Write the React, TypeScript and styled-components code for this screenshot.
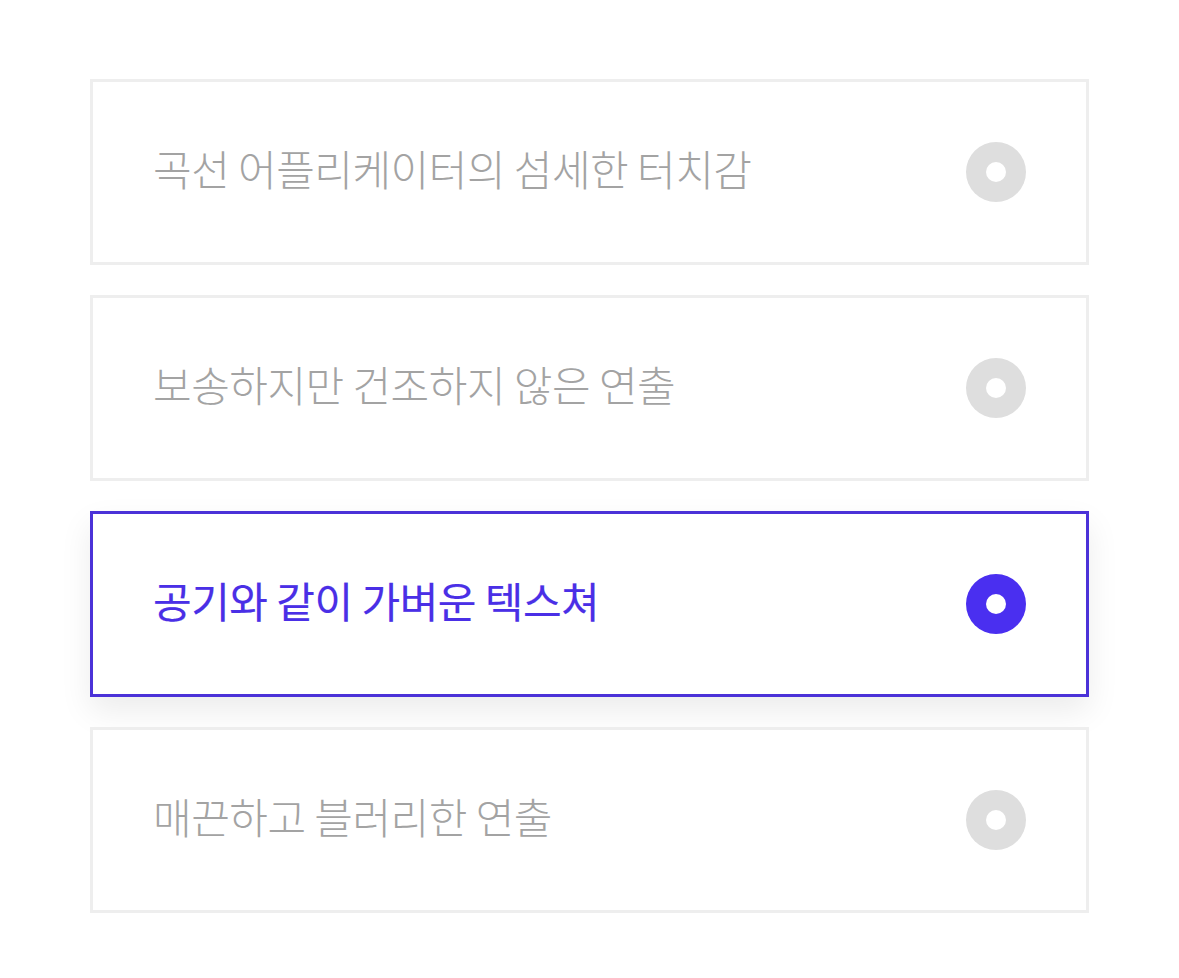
import React, { useState } from "react";
import styled, { createGlobalStyle } from "styled-components";

const Global = createGlobalStyle`
  html, body { margin: 0; padding: 0; background: #ffffff; }
  body { font-family: "Noto Sans CJK KR", "Noto Sans", sans-serif; }
`;

const List = styled.div`
  display: flex;
  flex-direction: column;
  gap: 30px;
  padding: 79px 90px 60px;
`;

const Card = styled.button<{ $active: boolean }>`
  display: flex;
  align-items: center;
  justify-content: space-between;
  height: 186px;
  box-sizing: border-box;
  padding: 0 60px;
  background: #ffffff;
  border: 3px solid ${(p) => (p.$active ? "#4b32d8" : "#eeeeee")};
  box-shadow: ${(p) => (p.$active ? "0 14px 30px rgba(0,0,0,0.08)" : "none")};
  cursor: pointer;
  text-align: left;
  font-family: inherit;
`;

const Label = styled.span<{ $active: boolean }>`
  font-size: 42px;
  letter-spacing: -0.5px;
  font-weight: ${(p) => (p.$active ? 400 : 300)};
  color: ${(p) => (p.$active ? "#4a2fe6" : "#a3a3a3")};
  -webkit-text-stroke: ${(p) => (p.$active ? "0.15px #4a2fe6" : "0")};
  line-height: 1;
  padding-bottom: 8px;
`;

const Dot = styled.span<{ $active: boolean }>`
  width: 60px;
  height: 60px;
  border-radius: 50%;
  background: ${(p) => (p.$active ? "#4a2ff0" : "#dedede")};
  display: flex;
  align-items: center;
  justify-content: center;
  flex-shrink: 0;
  &::after {
    content: "";
    width: 20px;
    height: 20px;
    border-radius: 50%;
    background: #ffffff;
  }
`;

const items = [
  "곡선 어플리케이터의 섬세한 터치감",
  "보송하지만 건조하지 않은 연출",
  "공기와 같이 가벼운 텍스쳐",
  "매끈하고 블러리한 연출",
];

export default function App() {
  const [active, setActive] = useState(2);
  return (
    <>
      <Global />
      <List>
        {items.map((t, i) => (
          <Card key={t} $active={i === active} onClick={() => setActive(i)}>
            <Label $active={i === active}>{t}</Label>
            <Dot $active={i === active} />
          </Card>
        ))}
      </List>
    </>
  );
}
